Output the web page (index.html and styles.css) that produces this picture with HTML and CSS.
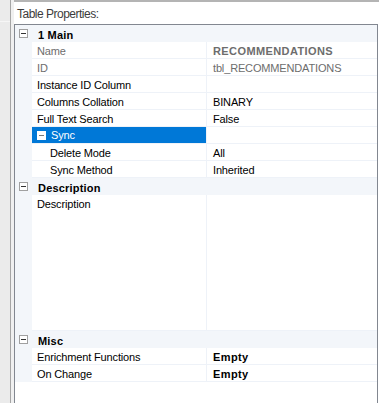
FILE: index.html
```html
<!DOCTYPE html>
<html lang="en">
<head>
    <meta charset="UTF-8">
    <title>Table Properties</title>
    <link rel="stylesheet" href="styles.css">
</head>
<body>
<div class="frame">
    <div class="side"></div>
    <div class="gap"></div>
    <div class="panel">
        <div class="caption">Table Properties:</div>
        <div class="grid">
            <!-- 1 Main -->
            <div class="cat"><div class="toggle"><span class="box"></span></div><span>1 Main</span></div>
            <div class="prop"><div class="gut"></div><div class="name dim">Name</div><div class="value dim strong">RECOMMENDATIONS</div></div>
            <div class="prop"><div class="gut"></div><div class="name dim">ID</div><div class="value dim">tbl_RECOMMENDATIONS</div></div>
            <div class="prop"><div class="gut"></div><div class="name">Instance ID Column</div><div class="value"></div></div>
            <div class="prop"><div class="gut"></div><div class="name">Columns Collation</div><div class="value">BINARY</div></div>
            <div class="prop"><div class="gut"></div><div class="name">Full Text Search</div><div class="value">False</div></div>
            <div class="prop"><div class="gut"></div><div class="name sel"><span class="box light"></span>Sync</div><div class="value"></div></div>
            <div class="prop"><div class="gut"></div><div class="name child">Delete Mode</div><div class="value">All</div></div>
            <div class="prop"><div class="gut"></div><div class="name child">Sync Method</div><div class="value">Inherited</div></div>
            <!-- Description -->
            <div class="cat"><div class="toggle"><span class="box"></span></div><span>Description</span></div>
            <div class="prop tall"><div class="gut"></div><div class="name">Description</div><div class="value"></div></div>
            <!-- Misc -->
            <div class="cat"><div class="toggle"><span class="box"></span></div><span>Misc</span></div>
            <div class="prop"><div class="gut"></div><div class="name">Enrichment Functions</div><div class="value strong">Empty</div></div>
            <div class="prop"><div class="gut"></div><div class="name">On Change</div><div class="value strong">Empty</div></div>
        </div>
    </div>
</div>
</body>
</html>
```

FILE: styles.css
```css
* {
    box-sizing: border-box;
}

body {
    margin: 0;
    width: 379px;
    height: 403px;
    overflow: hidden;
    background: #fff;
    font: 11px/1 "Liberation Sans", Arial, sans-serif;
    color: #000;
}

.frame {
    display: flex;
    height: 403px;
}

.side {
    width: 11px;
    background: #ebebeb;
    border-right: 1px solid #a5a5a5;
}

.side::before {
    content: "";
    display: block;
    height: 21px;
    border-bottom: 1px solid #f6f6f6;
}

.gap {
    width: 3px;
    background: #f0f0f0;
}

.panel {
    flex: 1;
    display: flex;
    flex-direction: column;
    border-top: 2px solid #b4b4b4;
}

.caption {
    height: 22px;
    padding: 6px 0 0 3px;
    font-size: 12px;
    letter-spacing: -0.5px;
    color: #3c3c3c;
}

.grid {
    flex: 1;
    margin-right: 1px;
    border: 1px solid #828790;
    border-bottom: none;
    letter-spacing: -0.15px;
}

.cat {
    display: flex;
    align-items: center;
    height: 17px;
    background: #f3f6fa;
    font-weight: bold;
    letter-spacing: 0.2px;
}

.cat > span {
    padding-top: 3px;
}

.cat .toggle {
    width: 17px;
    display: flex;
    justify-content: center;
    margin-right: 6px;
}

.box {
    position: relative;
    display: inline-block;
    width: 9px;
    height: 9px;
    border: 1px solid #a0a0a0;
    background: #fff;
}

.box::after {
    content: "";
    position: absolute;
    left: 1px;
    top: 3px;
    width: 5px;
    height: 1px;
    background: #333;
}

.box.light {
    margin-right: 5px;
    border-color: #fff;
}

.box.light::after {
    background: #7a7a7a;
}

.prop {
    display: flex;
    height: 17px;
}

.prop.tall {
    height: 136px;
}

.gut {
    width: 17px;
    background: #f3f6fa;
}

.name, .value {
    display: flex;
    align-items: flex-start;
    padding-top: 4px;
    border-bottom: 1px solid #eef2f8;
    white-space: nowrap;
}

.name {
    width: 175px;
    padding-left: 5px;
    border-right: 1px solid #eef2f8;
}

.value {
    flex: 1;
    padding-left: 6px;
}

.name.sel {
    background: #0078d7;
    color: #fff;
    align-items: center;
    padding-top: 1px;
}

.name.sel .box {
    margin-top: -1px;
}

.name.child {
    padding-left: 18px;
}

.dim {
    color: #6d6d6d;
}

.strong {
    font-weight: bold;
    letter-spacing: 0.4px;
}
```
